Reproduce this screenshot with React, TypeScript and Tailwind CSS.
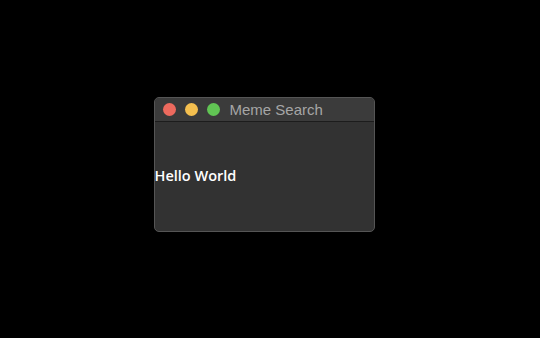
function TrafficLights() {
  return (
    <div className="flex items-center gap-[9px]">
      <span className="w-[13px] h-[13px] rounded-full bg-[#ed6a5e]" />
      <span className="w-[13px] h-[13px] rounded-full bg-[#f4bf4f]" />
      <span className="w-[13px] h-[13px] rounded-full bg-[#61c554]" />
    </div>
  );
}

export default function App() {
  return (
    <div className="w-[540px] h-[338px] bg-black flex items-center justify-center">
      {/* Window */}
      <div className="w-[221px] h-[135px] mt-[-10px] ml-[-12px] flex flex-col rounded-[5px] border border-[#555555] bg-[#323232] overflow-hidden">
        {/* Title bar */}
        <div className="h-[24px] flex items-center pl-[8px] bg-[#3b3b3b] border-b border-[#1c1c1c] shrink-0">
          <TrafficLights />
          <span className="ml-[10px] text-[15px] text-[#a6a6a6] font-[family-name:'Liberation_Sans',sans-serif] leading-none">
            Meme Search
          </span>
        </div>

        {/* Content */}
        <div className="flex-1 flex items-center">
          <p className="text-[14.5px] font-semibold text-white font-[family-name:'Open_Sans',sans-serif] leading-none">
            Hello World
          </p>
        </div>
      </div>
    </div>
  );
}
